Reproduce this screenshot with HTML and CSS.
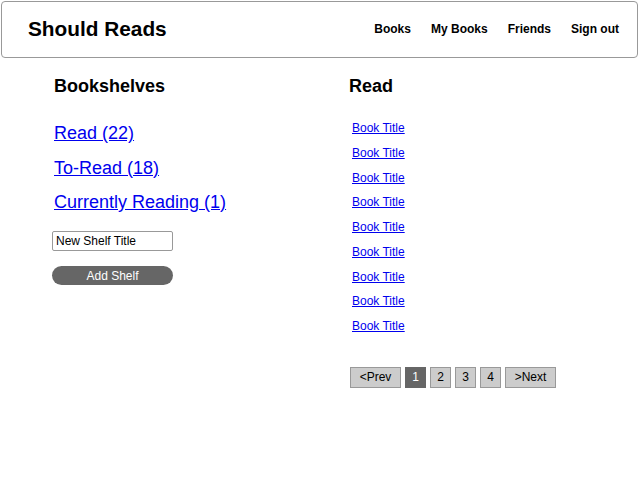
FILE: index.html
```html
<!DOCTYPE html>
<html>
<head>
<meta charset="utf-8">
<title>Should Reads</title>
<link rel="stylesheet" href="styles.css">
</head>
<body>
<header class="header">
  <div class="brand">Should Reads</div>
  <nav class="nav">
    <a href="#">Books</a>
    <a href="#">My Books</a>
    <a href="#">Friends</a>
    <a href="#">Sign out</a>
  </nav>
</header>
<main class="main">
  <section class="shelves">
    <h2 class="heading">Bookshelves</h2>
    <ul class="shelf-list">
      <li><a href="#">Read (22)</a></li>
      <li><a href="#">To-Read (18)</a></li>
      <li><a href="#">Currently Reading (1)</a></li>
    </ul>
    <form class="shelf-form">
      <input class="shelf-input" type="text" value="New Shelf Title">
      <button class="shelf-btn" type="button">Add Shelf</button>
    </form>
  </section>
  <section class="books">
    <h2 class="heading">Read</h2>
    <ul class="book-list">
      <li><a href="#">Book Title</a></li>
      <li><a href="#">Book Title</a></li>
      <li><a href="#">Book Title</a></li>
      <li><a href="#">Book Title</a></li>
      <li><a href="#">Book Title</a></li>
      <li><a href="#">Book Title</a></li>
      <li><a href="#">Book Title</a></li>
      <li><a href="#">Book Title</a></li>
      <li><a href="#">Book Title</a></li>
    </ul>
    <div class="pager">
      <a class="page wide" href="#">&lt;Prev</a>
      <a class="page active" href="#">1</a>
      <a class="page" href="#">2</a>
      <a class="page" href="#">3</a>
      <a class="page" href="#">4</a>
      <a class="page wide" href="#">&gt;Next</a>
    </div>
  </section>
</main>
</body>
</html>
```
FILE: styles.css
```css
html, body {
  margin: 0;
  padding: 0;
  background: #fff;
  font-family: "Liberation Sans", Arial, sans-serif;
  color: #000;
}

.header {
  margin: 1px 2px 0 1px;
  height: 55px;
  border: 1px solid #999;
  border-radius: 4px;
  display: flex;
  align-items: center;
  justify-content: space-between;
  padding: 0 18px 0 26px;
}

.brand {
  font-size: 20.8px;
  font-weight: bold;
  margin-top: -1px;
}

.nav {
  display: flex;
  gap: 20px;
  margin-top: -2px;
}

.nav a {
  font-size: 12px;
  font-weight: bold;
  color: #000;
  text-decoration: none;
}

.main {
  display: grid;
  grid-template-columns: 295px 1fr;
  padding-left: 54px;
}

.heading {
  margin: 18px 0 0;
  font-size: 18px;
  line-height: 21px;
  font-weight: bold;
}

.shelf-list {
  list-style: none;
  margin: 26px 0 0;
  padding: 0;
}

.shelf-list li {
  font-size: 18px;
  line-height: 21px;
  margin-bottom: 13.5px;
}

.shelf-list a {
  color: #00e;
}

.shelf-form {
  margin: 18px 0 0 -2px;
  display: flex;
  flex-direction: column;
  gap: 15px;
  width: 121px;
}

.shelf-input {
  box-sizing: border-box;
  width: 121px;
  height: 20px;
  margin: 0;
  padding: 0 3px;
  font-family: "Liberation Sans", Arial, sans-serif;
  font-size: 12px;
  color: #000;
  border: 1px solid #999;
  border-radius: 2px;
}

.shelf-btn {
  box-sizing: border-box;
  width: 121px;
  height: 19px;
  margin: 0;
  padding: 0;
  border: none;
  border-radius: 10px;
  background: #666;
  color: #fff;
  font-family: "Liberation Sans", Arial, sans-serif;
  font-size: 12px;
}

.book-list {
  list-style: none;
  margin: 19px 0 0 3px;
  padding: 0;
}

.book-list li {
  font-size: 12px;
  line-height: 24.75px;
}

.book-list a {
  color: #00e;
}

.pager {
  display: flex;
  gap: 4px;
  margin: 28px 0 0 1px;
}

.page {
  box-sizing: border-box;
  height: 21px;
  min-width: 21px;
  padding: 0 6px;
  border: 1px solid #999;
  background: #ccc;
  color: #000;
  font-size: 12px;
  line-height: 19px;
  text-align: center;
  text-decoration: none;
}

.page.wide {
  width: 51px;
}

.page.active {
  background: #666;
  color: #fff;
  border-color: #666;
}
```
